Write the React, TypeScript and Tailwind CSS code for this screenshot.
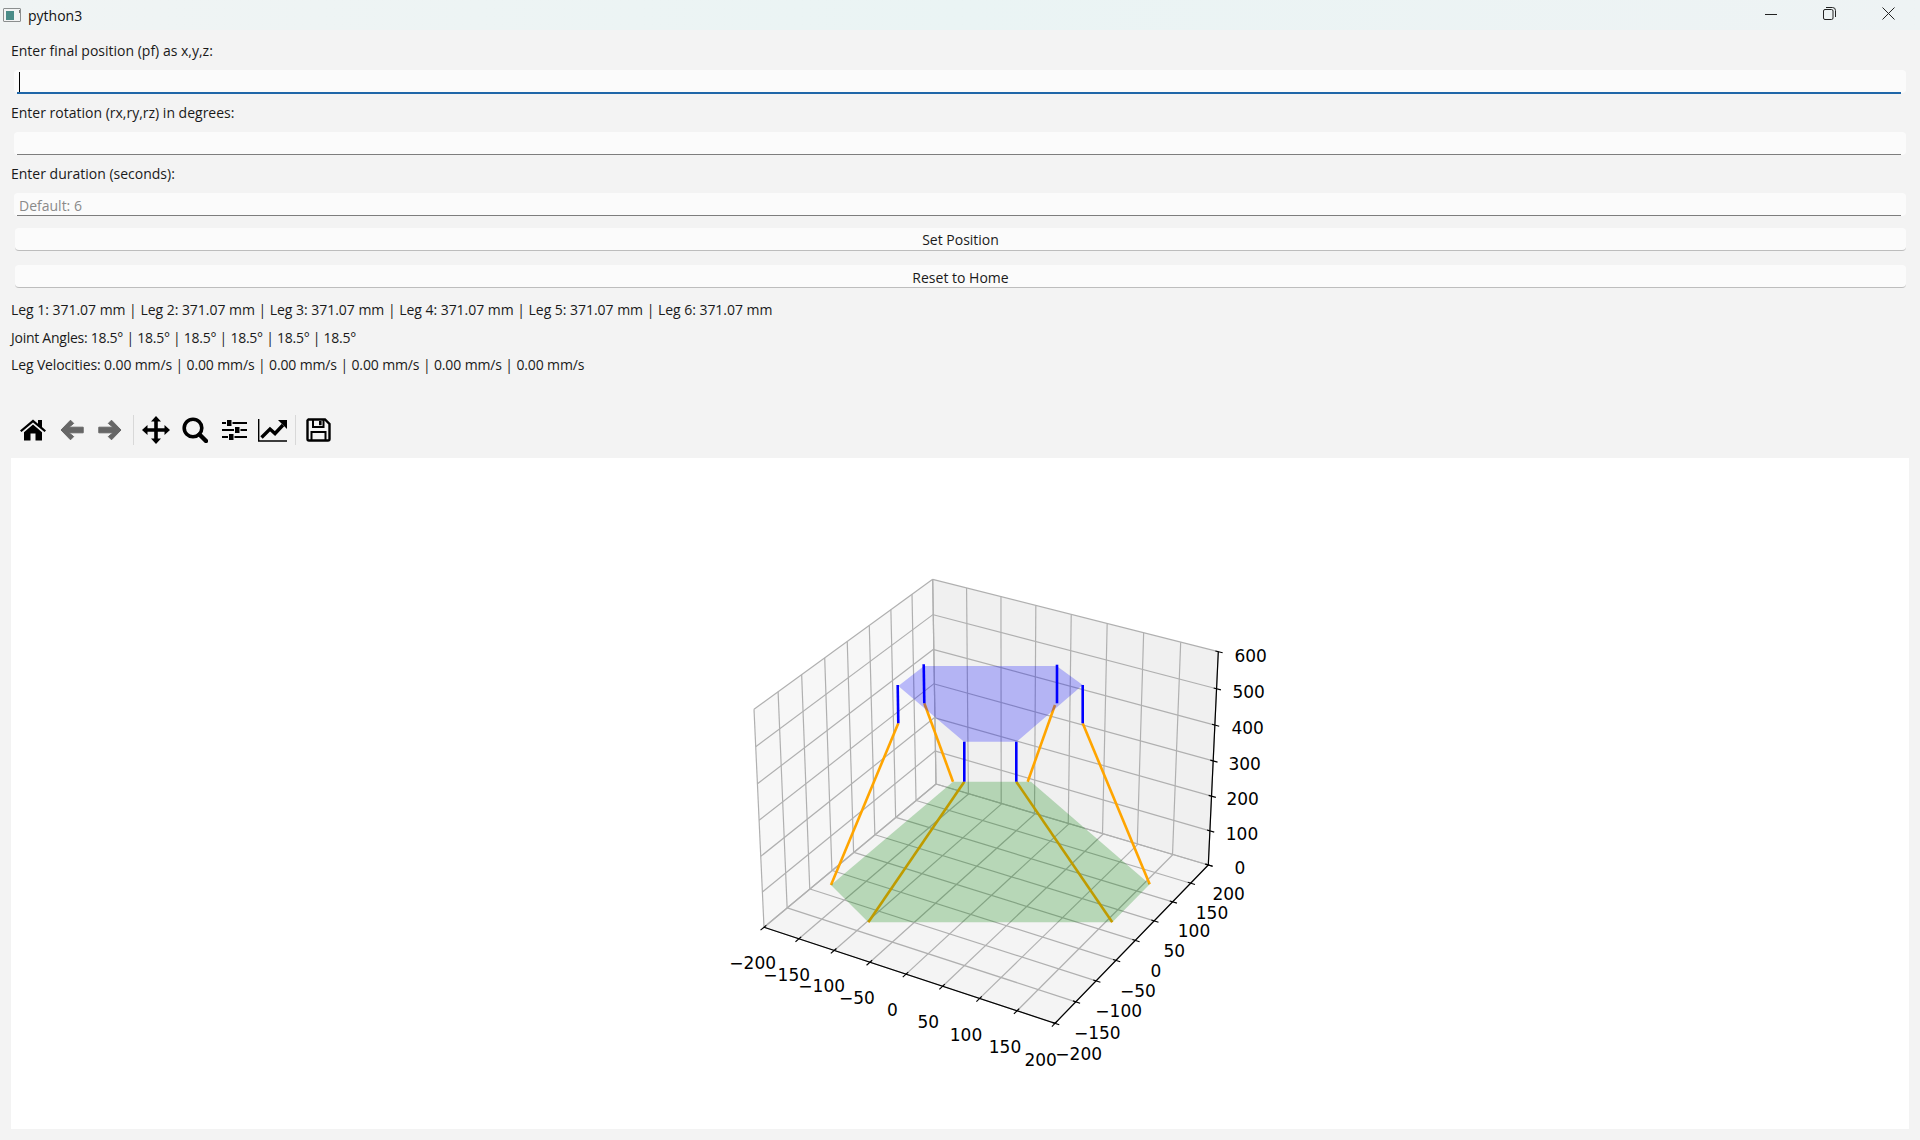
type Pt = [number, number];

// projective map of the unit square onto a quad (p00, p10, p11, p01)
function quad(a: Pt, b: Pt, c: Pt, d: Pt) {
  const dx1 = b[0] - c[0];
  const dx2 = d[0] - c[0];
  const dx3 = a[0] - b[0] + c[0] - d[0];
  const dy1 = b[1] - c[1];
  const dy2 = d[1] - c[1];
  const dy3 = a[1] - b[1] + c[1] - d[1];
  const det = dx1 * dy2 - dx2 * dy1;
  const g = (dx3 * dy2 - dx2 * dy3) / det;
  const h = (dx1 * dy3 - dx3 * dy1) / det;
  return (u: number, v: number): Pt => {
    const w = g * u + h * v + 1;
    return [
      ((b[0] - a[0] + g * b[0]) * u + (d[0] - a[0] + h * d[0]) * v + a[0]) / w,
      ((b[1] - a[1] + g * b[1]) * u + (d[1] - a[1] + h * d[1]) * v + a[1]) / w,
    ];
  };
}

const frontLeft: Pt = [764, 927.3];
const frontRight: Pt = [1055, 1023.3];
const backRight: Pt = [1208.3, 865];
const backLeft: Pt = [936, 784];
const topLeft: Pt = [754, 709.3];
const topBack: Pt = [932.7, 579.3];
const topRight: Pt = [1218.3, 651.7];

const floor = quad(frontLeft, frontRight, backRight, backLeft);
const leftWall = quad(frontLeft, backLeft, topBack, topLeft);
const backWall = quad(backLeft, backRight, topRight, topBack);

const xyTicks = [0, 1, 2, 3, 4, 5, 6, 7, 8].map((i) => i / 8);
const zTicks = [0, 1, 2, 3, 4, 5, 6].map((i) => i / 6);

const poly = (pts: Pt[]) => pts.map((p) => p.join(",")).join(" ");

function GridLine({ from, to }: { from: Pt; to: Pt }) {
  return (
    <line x1={from[0]} y1={from[1]} x2={to[0]} y2={to[1]} stroke="#b0b0b0" strokeWidth={1.2} />
  );
}

function Tick({ at, from }: { at: Pt; from: Pt }) {
  const len = Math.hypot(at[0] - from[0], at[1] - from[1]);
  const ux = (at[0] - from[0]) / len;
  const uy = (at[1] - from[1]) / len;
  return (
    <line
      x1={at[0] - ux * 3}
      y1={at[1] - uy * 3}
      x2={at[0] + ux * 4.5}
      y2={at[1] + uy * 4.5}
      stroke="#000"
      strokeWidth={1.1}
    />
  );
}

const xLabels: [string, number, number][] = [
  ["−200", 752.7, 963],
  ["−150", 786.7, 974.7],
  ["−100", 821.7, 985.7],
  ["−50", 857, 998],
  ["0", 892.3, 1010],
  ["50", 928.3, 1021.7],
  ["100", 966, 1035],
  ["150", 1005, 1047],
  ["200", 1040.7, 1059.7],
];

const yLabels: [string, number, number][] = [
  ["−200", 1078.7, 1054],
  ["−150", 1097.3, 1033],
  ["−100", 1118.7, 1010.7],
  ["−50", 1138, 991],
  ["0", 1156, 971],
  ["50", 1174.3, 951],
  ["100", 1194, 931],
  ["150", 1212, 913],
  ["200", 1228.7, 894],
];

const zLabels: [string, number, number][] = [
  ["0", 1240, 867.7],
  ["100", 1242, 834],
  ["200", 1242.7, 799],
  ["300", 1244.7, 763.7],
  ["400", 1247.7, 728],
  ["500", 1248.7, 692],
  ["600", 1250.7, 656],
];

const baseHex: Pt[] = [
  [953, 781.7],
  [1031, 781.7],
  [1149.7, 884.3],
  [1112.3, 922.3],
  [868.3, 922.3],
  [831, 885],
];

const topHex: Pt[] = [
  [924, 666],
  [1056.7, 666],
  [1082.7, 685],
  [1016.7, 741.7],
  [964, 741.7],
  [898.3, 686],
];

const legs: [Pt, Pt][] = [
  [[898.3, 723.3], [831, 885]],
  [[924.3, 703.3], [953, 781.7]],
  [[964.3, 781.7], [868.3, 922.3]],
  [[1016.3, 781.7], [1112.3, 922.3]],
  [[1055, 705], [1027.7, 781.7]],
  [[1082.7, 723.3], [1149.7, 884.3]],
];

const rods: [Pt, Pt][] = [
  [[897.7, 685], [898.3, 723.3]],
  [[923.7, 664.3], [924.3, 703.3]],
  [[964.3, 741.7], [964.3, 781.7]],
  [[1016.3, 741.7], [1016.3, 781.7]],
  [[1057, 664.7], [1057, 703.3]],
  [[1082.7, 685], [1082.7, 723.3]],
];

function Plot() {
  return (
    <svg viewBox="11 458 1898 671" className="block h-full w-full font-['DejaVu_Sans',sans-serif]">
      <polygon points={poly([frontLeft, backLeft, topBack, topLeft])} fill="#f7f7f7" />
      <polygon points={poly([backLeft, backRight, topRight, topBack])} fill="#f0f0f0" />
      <polygon points={poly([frontLeft, frontRight, backRight, backLeft])} fill="#f4f4f4" />

      {xyTicks.map((t) => (
        <g key={t}>
          <GridLine from={floor(t, 0)} to={floor(t, 1)} />
          <GridLine from={floor(0, t)} to={floor(1, t)} />
          <GridLine from={leftWall(t, 0)} to={leftWall(t, 1)} />
          <GridLine from={backWall(t, 0)} to={backWall(t, 1)} />
        </g>
      ))}
      {zTicks.map((t) => (
        <g key={t}>
          <GridLine from={leftWall(0, t)} to={leftWall(1, t)} />
          <GridLine from={backWall(0, t)} to={backWall(1, t)} />
        </g>
      ))}

      <polyline points={poly([frontLeft, frontRight, backRight, topRight])} fill="none" stroke="#000" strokeWidth={1.2} />
      {xyTicks.map((t) => (
        <g key={t}>
          <Tick at={floor(t, 0)} from={floor(t, 1)} />
          <Tick at={floor(1, t)} from={floor(0, t)} />
        </g>
      ))}
      {zTicks.map((t) => (
        <Tick key={t} at={backWall(1, t)} from={backWall(0, t)} />
      ))}

      {legs.map(([a, b], i) => (
        <line key={i} x1={a[0]} y1={a[1]} x2={b[0]} y2={b[1]} stroke="#ffa500" strokeWidth={2.6} />
      ))}
      <polygon points={poly(baseHex)} fill="#008000" fillOpacity={0.25} />
      <polygon points={poly(topHex)} fill="#0000ff" fillOpacity={0.25} />
      {rods.map(([a, b], i) => (
        <line key={i} x1={a[0]} y1={a[1]} x2={b[0]} y2={b[1]} stroke="#0000ff" strokeWidth={2.6} />
      ))}

      {[...xLabels, ...yLabels, ...zLabels].map(([label, x, y], i) => (
        <text key={i} x={x} y={y + 6.2} textAnchor="middle" fontSize={17} fill="#000">
          {label}
        </text>
      ))}
    </svg>
  );
}

function TextField({ focused, placeholder }: { focused?: boolean; placeholder?: string }) {
  return (
    <div className="relative mx-[3px] h-[23px] rounded-[4px] bg-[#fbfbfb]">
      <input
        readOnly
        placeholder={placeholder}
        className="h-full w-full rounded-[4px] bg-transparent pb-[2px] pl-[5px] text-[14px] outline-none placeholder:text-[#8a8a8a]"
      />
      {focused ? (
        <>
          <div className="absolute left-[5px] top-[2px] h-[20px] w-px bg-black" />
          <div className="absolute bottom-[-1px] left-[3px] right-[5px] h-[2px] bg-[#1f66a8]" />
        </>
      ) : (
        <div className="absolute bottom-0 left-[3px] right-[5px] h-px bg-[#7d7d7d]" />
      )}
    </div>
  );
}

function PushButton({ label, className }: { label: string; className: string }) {
  return (
    <button className={`ml-[4px] mr-[3px] h-[23px] w-full rounded-[4px] border-b border-[#bdbdbd] bg-[#fbfbfb] text-center text-[14px] text-[#1a1a1a] ${className}`}>
      {label}
    </button>
  );
}

function HomeIcon() {
  return (
    <svg width="26" height="22" viewBox="0 0 26 22" fill="#000">
      <path d="M0 11.5 13 .5l5 4.2V1h4v7l4 3.5-1.5 1.5L13 3.5 1.5 13Z" />
      <path d="M4 13.2 13 5.5l9 7.7V21.5h-6.500v-7h-5v7H4Z" />
    </svg>
  );
}

function ArrowIcon({ flip }: { flip?: boolean }) {
  return (
    <svg width="24" height="24" viewBox="0 0 24 24" fill="#666" stroke="#666" strokeLinejoin="round" className={flip ? "-scale-x-100" : ""}>
      <path d="M1 12 10.5 2.2 13.7 5.4 9 9.2h14.2v5.6H9l4.7 3.8-3.2 3.2Z" />
    </svg>
  );
}

function MoveIcon() {
  return (
    <svg width="28" height="28" viewBox="0 0 28 28" fill="#000">
      <path d="M14 0 19 5.5H15.8V12.2H22.5V9L28 14 22.5 19V15.8H15.8V22.5H19L14 28 9 22.5H12.2V15.8H5.5V19L0 14 5.5 9V12.2H12.2V5.5H9Z" />
    </svg>
  );
}

function SearchIcon() {
  return (
    <svg width="26" height="26" viewBox="0 0 26 26" fill="none" stroke="#000">
      <circle cx="11" cy="11" r="8.8" strokeWidth="3.6" />
      <path d="M17.5 17.5 24 24" strokeWidth="4.4" strokeLinecap="round" />
    </svg>
  );
}

function SlidersIcon() {
  return (
    <svg width="25" height="22" viewBox="0 0 25 22" fill="#000">
      <path d="M0 3h4v2H0Zm10.5 0H25v2H10.5ZM0 10h12v2H0Zm18.5 0H25v2h-6.500ZM0 17h6v2H0Zm12.500 0H25v2H12.500Z" />
      <rect x="5" y="1" width="4.500" height="6" />
      <rect x="13" y="8" width="4.500" height="6" />
      <rect x="7" y="15" width="4.500" height="6" />
    </svg>
  );
}

function ChartIcon() {
  return (
    <svg width="29" height="23" viewBox="0 0 29 23">
      <path d="M.7 0V22H29" fill="none" stroke="#000" strokeWidth="1.400" />
      <path d="M3.500 18.500 12 10l5 4.500L25 6" fill="none" stroke="#000" strokeWidth="3.400" />
      <path d="M20 1h9v9Z" fill="#000" />
    </svg>
  );
}

function SaveIcon() {
  return (
    <svg width="25" height="24" viewBox="0 0 25 24" fill="none" stroke="#000" strokeWidth="2.400">
      <path d="M2.500 1.500H19L23.500 6V21a1.500 1.500 0 0 1-1.500 1.500H3A1.500 1.500 0 0 1 1.500 21V2.500Z" />
      <path d="M7 1.500V9H17.500V1.500" strokeWidth="2" />
      <path d="M5.500 22.500V14H19.500V22.500" strokeWidth="2" />
      <rect x="13" y="3" width="2.600" height="4.200" fill="#000" stroke="none" />
    </svg>
  );
}

export default function App() {
  return (
    <div className="flex h-[1140px] w-[1920px] flex-col overflow-hidden bg-[#f3f3f3] font-['Open_Sans',sans-serif] text-[#1a1a1a]">
      <header className="flex h-[30px] shrink-0 items-center bg-gradient-to-r from-[#f0f4f4] via-[#eaf4f4] to-[#eef3f4]">
        <div className="ml-[3px] flex h-[14px] w-[18px] items-center rounded-[1px] border border-[#8b8f8f] bg-[#f2f4f4] pl-[2px]">
          <div className="h-[9px] w-[8px] bg-[#4a8c88]" />
          <div className="ml-[5px] mt-[1px] h-[3px] w-px self-start bg-[#777]" />
        </div>
        <span className="ml-[7px] text-[14px] text-[#111]">python3</span>
        <div className="mb-[3px] ml-auto flex items-center">
          <svg width="12" height="12" viewBox="0 0 12 12" className="mr-[46px]" fill="none" stroke="#222">
            <path d="M0 6.500h12" />
          </svg>
          <svg width="13" height="13" viewBox="0 0 13 13" className="mr-[46px]" fill="none" stroke="#222">
            <rect x="0.5" y="2.500" width="9.500" height="10" rx="1.500" />
            <path d="M3 .5h6.500a3 3 0 0 1 3 3V10" />
          </svg>
          <svg width="13" height="13" viewBox="0 0 13 13" className="mr-[25px]" fill="none" stroke="#222">
            <path d="M.5.5l12 12M12.500.5l-12 12" />
          </svg>
        </div>
      </header>

      <div className="flex min-h-0 flex-1 flex-col px-[11px]">
        <label className="mt-[10px] h-[21px] text-[14px] leading-[21px]">Enter final position (pf) as x,y,z:</label>
        <div className="mt-[9px]">
          <TextField focused />
        </div>
        <label className="mt-[9px] h-[21px] text-[14px] leading-[21px]">Enter rotation (rx,ry,rz) in degrees:</label>
        <div className="mt-[9px]">
          <TextField />
        </div>
        <label className="mt-[8px] h-[21px] text-[14px] leading-[21px]">Enter duration (seconds):</label>
        <div className="mt-[9px]">
          <TextField placeholder="Default: 6" />
        </div>

        <div className="mt-[12px] flex">
          <PushButton label="Set Position" className="leading-[23px]" />
        </div>
        <div className="mt-[14px] flex">
          <PushButton label="Reset to Home" className="leading-[25px]" />
        </div>

        <div className="mt-[8px] h-[28px] text-[14px] leading-[28px] tracking-[-0.03px]">
          Leg 1: 371.07 mm | Leg 2: 371.07 mm | Leg 3: 371.07 mm | Leg 4: 371.07 mm | Leg 5: 371.07 mm | Leg 6: 371.07 mm
        </div>
        <div className="h-[27px] text-[14px] leading-[28px] tracking-[-0.26px]">
          Joint Angles: 18.5° | 18.5° | 18.5° | 18.5° | 18.5° | 18.5°
        </div>
        <div className="h-[27px] text-[14px] leading-[27px] tracking-[-0.13px]">
          Leg Velocities: 0.00 mm/s | 0.00 mm/s | 0.00 mm/s | 0.00 mm/s | 0.00 mm/s | 0.00 mm/s
        </div>

        <div className="mt-[38px] flex h-[28px] items-center pl-[9px]">
          <HomeIcon />
          <div className="ml-[14px] flex">
            <ArrowIcon />
          </div>
          <div className="ml-[14px] flex">
            <ArrowIcon flip />
          </div>
          <div className="ml-[11px] h-[30px] w-px bg-[#d8d8d8]" />
          <div className="ml-[8px] flex">
            <MoveIcon />
          </div>
          <div className="ml-[12px] flex">
            <SearchIcon />
          </div>
          <div className="ml-[14px] flex">
            <SlidersIcon />
          </div>
          <div className="ml-[11px] flex">
            <ChartIcon />
          </div>
          <div className="ml-[8px] h-[30px] w-px bg-[#d8d8d8]" />
          <div className="ml-[10px] flex">
            <SaveIcon />
          </div>
        </div>

        <div className="mt-[14px] h-[671px] bg-white">
          <Plot />
        </div>
      </div>
    </div>
  );
}
